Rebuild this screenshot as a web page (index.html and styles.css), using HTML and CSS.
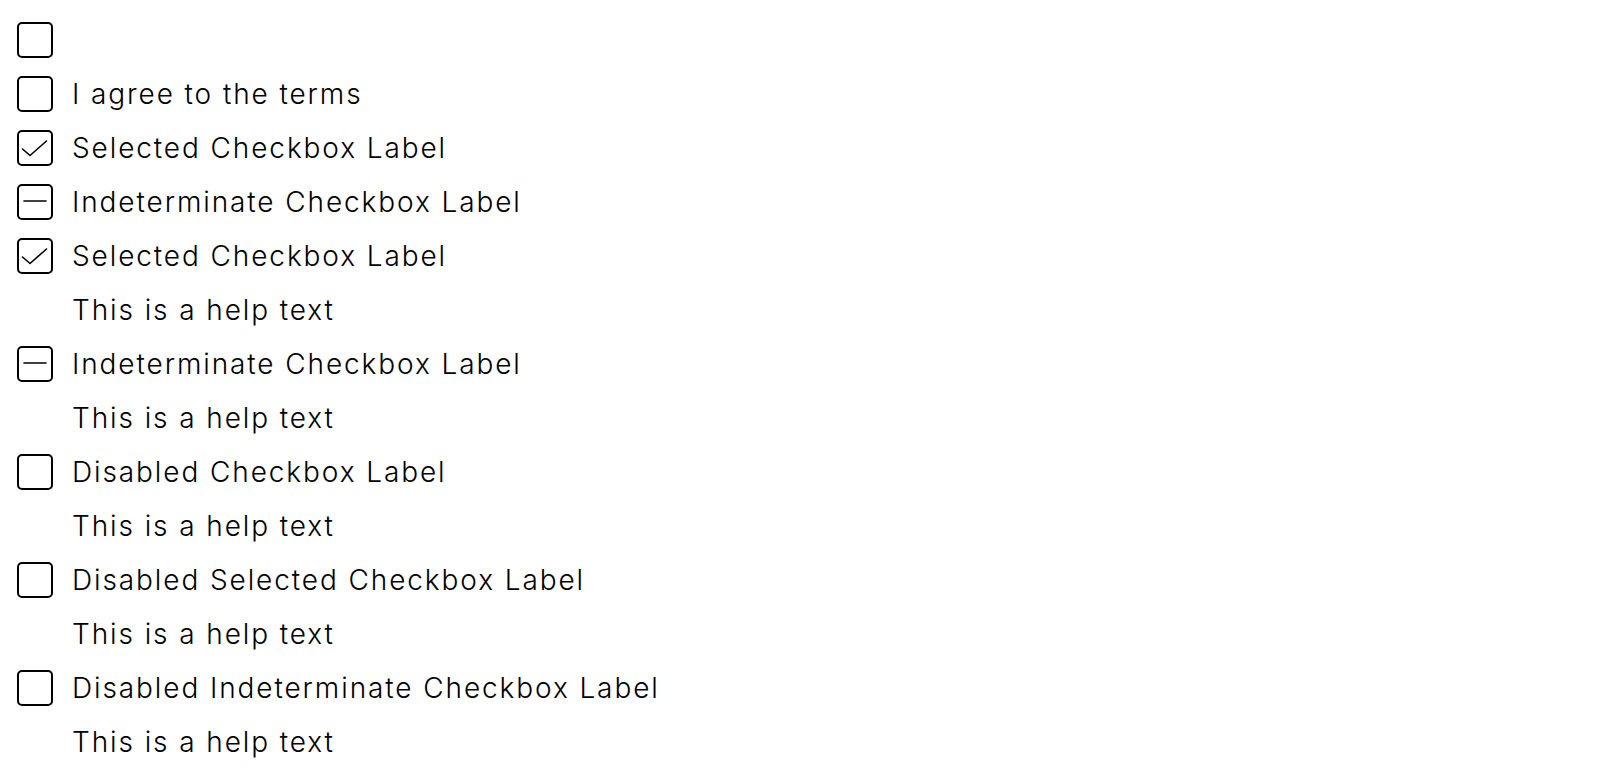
FILE: index.html
```html
<!DOCTYPE html>
<html lang="en">
<head>
<meta charset="utf-8">
<title>Checkboxes</title>
<link rel="stylesheet" href="styles.css">
</head>
<body>
<div class="list">
  <div class="row">
    <span class="box"></span>
  </div>
  <div class="row">
    <span class="box"></span>
    <span class="label">I agree to the terms</span>
  </div>
  <div class="row">
    <span class="box"><svg viewBox="0 0 36 36" width="36" height="36"><polyline points="5.5,19 13,25.5 29.5,11" /></svg></span>
    <span class="label">Selected Checkbox Label</span>
  </div>
  <div class="row">
    <span class="box"><svg viewBox="0 0 36 36" width="36" height="36"><line x1="7" y1="17" x2="29" y2="17" /></svg></span>
    <span class="label">Indeterminate Checkbox Label</span>
  </div>
  <div class="row">
    <span class="box"><svg viewBox="0 0 36 36" width="36" height="36"><polyline points="5.5,19 13,25.5 29.5,11" /></svg></span>
    <span class="label">Selected Checkbox Label</span>
  </div>
  <div class="help">This is a help text</div>
  <div class="row">
    <span class="box"><svg viewBox="0 0 36 36" width="36" height="36"><line x1="7" y1="17" x2="29" y2="17" /></svg></span>
    <span class="label">Indeterminate Checkbox Label</span>
  </div>
  <div class="help">This is a help text</div>
  <div class="row disabled">
    <span class="box"></span>
    <span class="label">Disabled Checkbox Label</span>
  </div>
  <div class="help">This is a help text</div>
  <div class="row disabled">
    <span class="box"></span>
    <span class="label">Disabled Selected Checkbox Label</span>
  </div>
  <div class="help">This is a help text</div>
  <div class="row disabled">
    <span class="box"></span>
    <span class="label">Disabled Indeterminate Checkbox Label</span>
  </div>
  <div class="help">This is a help text</div>
</div>
</body>
</html>
```

FILE: styles.css
```css
html, body {
  margin: 0;
  padding: 0;
  background: #ffffff;
}

body {
  font-family: "Inter", "Liberation Sans", sans-serif;
  font-weight: 300;
  letter-spacing: 1.9px;
  color: #000000;
  font-size: 28px;
}

.list {
  display: flex;
  flex-direction: column;
  padding: 13px 0 0 17px;
}

.row {
  display: flex;
  align-items: center;
  height: 54px;
  gap: 19px;
}

.box {
  box-sizing: border-box;
  width: 36px;
  height: 36px;
  border: 2px solid #000000;
  border-radius: 5px;
  position: relative;
  flex: none;
}

.box svg {
  position: absolute;
  left: -2px;
  top: -2px;
  fill: none;
  stroke: #000000;
  stroke-width: 1.6;
  stroke-linecap: round;
  stroke-linejoin: round;
}

.label {
  line-height: 54px;
  white-space: nowrap;
}

.help {
  height: 54px;
  line-height: 54px;
  padding-left: 55px;
  white-space: nowrap;
}
```
